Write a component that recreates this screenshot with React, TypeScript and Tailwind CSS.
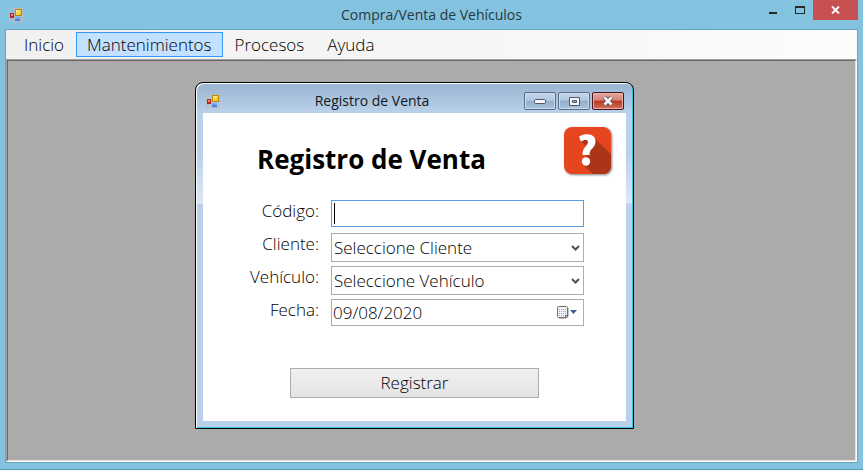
import type { ReactNode } from "react";

const menuItems = ["Inicio", "Mantenimientos", "Procesos", "Ayuda"];

function FormIcon() {
  return (
    <svg width="14" height="14" viewBox="0 0 14 14" aria-hidden="true">
      <defs>
        <linearGradient id="gold" x1="0" y1="0" x2="1" y2="1">
          <stop offset="0" stopColor="#fff3a0" />
          <stop offset="1" stopColor="#f0b400" />
        </linearGradient>
        <linearGradient id="blue" x1="0" y1="0" x2="0" y2="1">
          <stop offset="0" stopColor="#8fb4f5" />
          <stop offset="1" stopColor="#3a6fd8" />
        </linearGradient>
      </defs>
      <rect x="0.5" y="0.5" width="13" height="13" fill="none" stroke="#b9bcc0" />
      <path d="M5.5 0V14M0 10.5H14" stroke="#b9bcc0" />
      <rect x="1" y="5" width="4" height="5" fill="#b3261c" />
      <rect x="2" y="6" width="2" height="2" fill="#ef8a80" />
      <rect x="6.5" y="1.5" width="6" height="6" fill="url(#gold)" stroke="#b58a10" />
      <rect x="6" y="9" width="5" height="4" fill="url(#blue)" />
    </svg>
  );
}

function HelpBadge() {
  return (
    <svg className="drop-shadow-[1px_1px_1px_rgba(0,0,0,0.5)]" width="47" height="47" viewBox="0 0 47 47" role="img" aria-label="Ayuda del registro">
      <defs>
        <clipPath id="badge">
          <rect width="47" height="47" rx="8" />
        </clipPath>
      </defs>
      <g clipPath="url(#badge)">
        <rect width="47" height="47" fill="#e5451f" />
        <path d="M29 10L47 27V47H29L18 37L23 28L23 20L16 13Z" fill="#ac3518" />
      </g>
      <path
        d="M15 9.5C18 7.900 20.500 7.300 23.500 7.300C28.500 7.300 31.500 10.300 31.500 14.600C31.500 18.300 29.500 20.300 27.500 22.300C26 23.900 25.700 25.300 25.500 28H18.500C18.500 24.700 19 22.700 21 20.200C22.600 18.200 24 16.900 24 15C24 13.500 23 12.900 21.600 12.900C20 12.900 18.500 13.500 16.800 14.600Z"
        fill="#fff"
      />
      <circle cx="22" cy="34.500" r="4.200" fill="#fff" />
    </svg>
  );
}

function ChildControl({ label, close, children }: { label: string; close?: boolean; children: ReactNode }) {
  return (
    <button
      type="button"
      aria-label={label}
      className={
        close
          ? "flex h-[18px] w-8 items-center justify-center rounded-xs border border-[#431422] bg-[linear-gradient(#e3a79d,#d98477_45%,#b8391f_50%,#d0705a)] shadow-[inset_0_0_0_1px_#e9b0a6]"
          : "flex h-[18px] w-8 items-center justify-center rounded-xs border border-[#596d86] bg-[linear-gradient(#c3d5e9,#b3c9e1_45%,#91aecd_50%,#aac4de)] shadow-[inset_0_0_0_1px_#cddcec]"
      }
    >
      {children}
    </button>
  );
}

function Row({ id, label, children }: { id: string; label: string; children: ReactNode }) {
  return (
    <div className="flex h-[33px] items-start gap-3">
      <label htmlFor={id} className="w-[116px] text-right leading-[22px]">
        {label}
      </label>
      <div className="relative flex-1">{children}</div>
    </div>
  );
}

function Combo({ id, text }: { id: string; text: string }) {
  return (
    <>
      <select id={id} className="block h-[29px] w-full appearance-none border border-[#abadb3] bg-white pl-0.5 outline-none">
        <option>{text}</option>
      </select>
      <svg className="pointer-events-none absolute top-3 right-1" width="9" height="7" viewBox="0 0 9 7" aria-hidden="true">
        <path d="M1 1L4.500 4.500L8 1" fill="none" stroke="#505050" strokeWidth="2" />
      </svg>
    </>
  );
}

function SaleDialog() {
  return (
    <section
      aria-label="Registro de Venta"
      className="absolute top-[21px] left-[187px] w-[439px] rounded-t-lg border border-black bg-[linear-gradient(#99b4d1,#b9d1ea_30px,#b9d1ea_70px,#dce8f5_120px,#b9d1ea_121px)] shadow-[inset_1px_1px_0_#fff,inset_-1px_-1px_0_#35c5e6]"
    >
      <div className="grid h-[30px] grid-cols-[auto_1fr_auto] items-center px-[9px] pt-1.5">
        <div className="pl-px">
          <FormIcon />
        </div>
        <h2 className="text-center text-sm whitespace-nowrap text-[#101820]">Registro de Venta</h2>
        <div className="flex justify-end gap-0.5">
          <ChildControl label="Minimizar formulario">
            <svg width="12" height="6" viewBox="0 0 12 6">
              <rect x="0.5" y="1.500" width="11" height="4" rx="1" fill="#f5f7fa" stroke="#535666" />
            </svg>
          </ChildControl>
          <ChildControl label="Maximizar formulario">
            <svg width="11" height="9" viewBox="0 0 11 9">
              <path fillRule="evenodd" d="M0.500 0.500H10.500V8.500H0.500ZM3.500 3.500V5.500H7.500V3.500Z" fill="#f5f7fa" stroke="#535666" />
            </svg>
          </ChildControl>
          <ChildControl label="Cerrar formulario" close>
            <svg width="12" height="10" viewBox="0 0 12 10">
              <path d="M2.500 1.500L9.500 8.500M9.500 1.500L2.500 8.500" stroke="#535666" strokeWidth="4.500" />
              <path d="M2.500 1.500L9.500 8.500M9.500 1.500L2.500 8.500" stroke="#f5f7fa" strokeWidth="2.600" />
            </svg>
          </ChildControl>
        </div>
      </div>

      <form className="mx-[7px] mb-[7px] bg-white pb-[23px] text-[17px] font-light">
        <div className="flex justify-between pt-3.5 pr-[15px] pl-[54px]">
          <h1 className="pt-3.5 text-[26px] leading-9 font-bold whitespace-nowrap">Registro de Venta</h1>
          <HelpBadge />
        </div>
        <div className="pt-[23px] pr-[42px]">
          <Row id="codigo" label="Código:">
            <input id="codigo" type="text" className="block h-[27px] w-full border border-[#569de5] bg-white px-1 caret-transparent outline-none" />
            <span className="pointer-events-none absolute top-[3px] left-[3px] h-[21px] w-px bg-black" />
          </Row>
          <Row id="cliente" label="Cliente:">
            <Combo id="cliente" text="Seleccione Cliente" />
          </Row>
          <Row id="vehiculo" label="Vehículo:">
            <Combo id="vehiculo" text="Seleccione Vehículo" />
          </Row>
          <Row id="fecha" label="Fecha:">
            <input id="fecha" type="text" defaultValue="09/08/2020" className="block h-[27px] w-full border border-[#abadb3] bg-white px-px outline-none" />
            <button type="button" aria-label="Abrir calendario" className="absolute top-[7px] right-1.5">
              <svg width="21" height="13" viewBox="0 0 21 13">
                <path d="M2 12.500H9L11.500 10V2" fill="none" stroke="#c9c3c3" />
                <rect x="0.500" y="0.500" width="10" height="11" rx="1" fill="#eef1f6" stroke="#7b6a6a" />
                <path d="M2 3.500H9M2 5.500H9M2 7.500H9M2 9.500H7" stroke="#9aa9c2" strokeDasharray="1 1" />
                <path d="M8 12V9H11Z" fill="#7b6a6a" />
                <path d="M13 4H20L16.500 8Z" fill="#425f92" />
              </svg>
            </button>
          </Row>
        </div>
        <div className="px-[87px] pt-9">
          <button type="button" className="block h-[30px] w-full border border-[#acacac] bg-linear-to-b from-[#f0f0f0] to-[#e4e4e4]">
            Registrar
          </button>
        </div>
      </form>
    </section>
  );
}

export default function App() {
  return (
    <div className="flex h-screen min-h-80 flex-col border-b border-[#5a93ad] bg-[#84c3df] px-[5px] pb-[6px] font-['Open_Sans','Noto_Sans',sans-serif] text-black">
      <header className="grid h-[29px] shrink-0 grid-cols-[1fr_auto_1fr] items-center">
        <div className="pl-1">
          <FormIcon />
        </div>
        <div className="text-sm text-[#26383f]">Compra/Venta de Vehículos</div>
        <div className="flex h-5 items-start justify-end self-start">
          <button type="button" aria-label="Minimizar" className="flex h-5 w-[27px] items-center justify-center">
            <svg width="8" height="8" viewBox="0 0 8 8">
              <rect y="6" width="8" height="2" fill="#26292b" />
            </svg>
          </button>
          <button type="button" aria-label="Maximizar" className="flex h-5 w-[27px] items-center justify-center">
            <svg width="10" height="8" viewBox="0 0 10 8">
              <path fillRule="evenodd" d="M0 0H10V8H0ZM1 2V7H9V2Z" fill="#26292b" />
            </svg>
          </button>
          <button type="button" aria-label="Cerrar" className="flex h-5 w-[45px] items-center justify-center bg-[#c75050]">
            <svg width="9" height="8" viewBox="0 0 9 8">
              <path d="M1 0.500L8 7.500M8 0.500L1 7.500" stroke="#fff" strokeWidth="1.800" />
            </svg>
          </button>
        </div>
      </header>

      <div className="flex min-h-0 flex-1 flex-col border border-[#6ba3bc]">
        <nav className="flex h-[29px] shrink-0 items-center gap-px bg-linear-to-r from-[#f0f0f0] to-[#fcfcfc] pl-[7px] text-[17px] font-light">
          {menuItems.map((item) => (
            <button
              key={item}
              type="button"
              className={
                item === "Mantenimientos"
                  ? "flex h-[25px] items-center border border-[#3399ff] bg-[#c2e0ff] px-2.5"
                  : "flex h-[25px] items-center border border-transparent px-2.5"
              }
            >
              {item}
            </button>
          ))}
        </nav>
        <div className="flex min-h-0 flex-1 border border-t-[#a0a0a0] border-r-white border-b-white border-l-[#a0a0a0]">
          <main className="relative flex-1 border border-t-[#696969] border-r-[#e3e3e3] border-b-[#e3e3e3] border-l-[#696969] bg-[#ababab]">
            <SaleDialog />
          </main>
        </div>
      </div>
    </div>
  );
}
